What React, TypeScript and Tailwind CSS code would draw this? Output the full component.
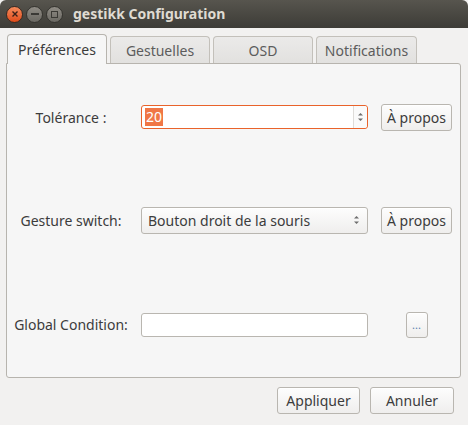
import React from "react";

const font = { fontFamily: '"Noto Sans", "DejaVu Sans", sans-serif' };

function Btn({ children, className = "" }: { children: React.ReactNode; className?: string }) {
  return (
    <div
      className={
        "flex items-center justify-center rounded-[3px] border border-[#b9b6b0] bg-gradient-to-b from-[#fdfdfd] to-[#efeeed] text-[#3c3c3c] shadow-[inset_0_1px_0_#ffffff] " +
        className
      }
    >
      {children}
    </div>
  );
}

function UpDown() {
  return (
    <svg width="7" height="12" viewBox="0 0 7 12">
      <path d="M1 4.5 L3.5 2 L6 4.5 Z" fill="#6d6d6d" />
      <path d="M1 7.5 L3.5 10 L6 7.5 Z" fill="#6d6d6d" />
    </svg>
  );
}

export default function App() {
  return (
    <div className="w-[468px] h-[425px] bg-[#f2f1f0] flex flex-col overflow-hidden" style={font}>
      {/* Title bar */}
      <div className="h-[28px] rounded-t-[6px] bg-gradient-to-b from-[#57554e] to-[#3d3c37] flex items-center relative">
        <div className="flex items-center gap-[3px] pl-[6px]">
          <div className="w-[17px] h-[17px] rounded-full bg-gradient-to-b from-[#f58a5a] to-[#df4a16] border border-[#3a2a22] flex items-center justify-center">
            <svg width="8" height="8" viewBox="0 0 8 8">
              <path d="M1.5 1.5 L6.5 6.5 M6.5 1.5 L1.5 6.5" stroke="#3a2018" strokeWidth="1.4" />
            </svg>
          </div>
          <div className="w-[17px] h-[17px] rounded-full bg-gradient-to-b from-[#8f8c85] to-[#6a6862] border border-[#35342f] flex items-center justify-center">
            <div className="w-[8px] h-[2px] bg-[#3a3935]" />
          </div>
          <div className="w-[17px] h-[17px] rounded-full bg-gradient-to-b from-[#8f8c85] to-[#6a6862] border border-[#35342f] flex items-center justify-center">
            <div className="w-[7px] h-[7px] border-[1.5px] border-[#3a3935]" />
          </div>
        </div>
        <div className="ml-[10px] text-[14px] font-bold text-[#dfdbd2] leading-none">gestikk Configuration</div>
      </div>

      {/* Tabs */}
      <div className="pl-[7px] pt-[6px] flex items-end gap-[3px] h-[35px] relative z-10">
        <div className="w-[100px] h-[30px] -mb-px rounded-t-[4px] border border-b-0 border-[#b7b4ae] bg-[#f6f6f6] flex items-center justify-center text-[14px] text-[#3c3c3c]">
          Préférences
        </div>
        <div className="w-[100px] h-[27px] rounded-t-[4px] border border-b-0 border-[#c3c0ba] bg-gradient-to-b from-[#ebeae9] to-[#e2e1df] flex items-center justify-center text-[14px] text-[#5c5c5c]">
          Gestuelles
        </div>
        <div className="w-[100px] h-[27px] rounded-t-[4px] border border-b-0 border-[#c3c0ba] bg-gradient-to-b from-[#ebeae9] to-[#e2e1df] flex items-center justify-center text-[14px] text-[#5c5c5c]">
          OSD
        </div>
        <div className="w-[101px] h-[27px] rounded-t-[4px] border border-b-0 border-[#c3c0ba] bg-gradient-to-b from-[#ebeae9] to-[#e2e1df] flex items-center justify-center text-[14px] text-[#5c5c5c]">
          Notifications
        </div>
      </div>

      {/* Panel */}
      <div className="ml-[6px] w-[455px] h-[315px] border border-[#b7b4ae] rounded-b-[3px] rounded-tr-[3px] bg-[#f6f6f6] grid grid-rows-3 text-[14px] text-[#3c3c3c]">
        {/* Row 1 */}
        <div className="flex items-center pt-[2px]">
          <div className="w-[128px] text-center">Tolérance :</div>
          <div className="ml-[6px] w-[227px] h-[24px] rounded-[3px] border border-[#e9632b] bg-white flex items-center">
            <div className="flex-1 pl-[3px] flex items-center">
              <span className="bg-[#f07746] text-white px-[1px] leading-[18px]">20</span>
            </div>
            <div className="w-[14px] h-full border-l border-[#dedcd9] flex items-center justify-center bg-[#fafafa] rounded-r-[3px]">
              <UpDown />
            </div>
          </div>
          <Btn className="ml-[13px] w-[71px] h-[27px] text-[14px]">À propos</Btn>
        </div>
        {/* Row 2 */}
        <div className="flex items-center">
          <div className="w-[128px] text-center">Gesture switch:</div>
          <Btn className="ml-[6px] w-[227px] h-[27px] !justify-between px-[6px]">
            <span>Bouton droit de la souris</span>
            <span className="mr-[1px] flex"><UpDown /></span>
          </Btn>
          <Btn className="ml-[13px] w-[71px] h-[27px] text-[14px]">À propos</Btn>
        </div>
        {/* Row 3 */}
        <div className="flex items-center">
          <div className="w-[128px] text-center">Global Condition:</div>
          <div className="ml-[6px] w-[227px] h-[24px] rounded-[3px] border border-[#b9b6b0] bg-white" />
          <div className="ml-[13px] w-[71px] flex justify-center">
            <Btn className="w-[22px] h-[26px] text-[11px] !text-[#5a7fb0]">...</Btn>
          </div>
        </div>
      </div>

      {/* Bottom buttons */}
      <div className="flex justify-end gap-[10px] pr-[14px] pt-[9px] text-[14px]">
        <Btn className="w-[83px] h-[27px]">Appliquer</Btn>
        <Btn className="w-[84px] h-[27px]">Annuler</Btn>
      </div>
    </div>
  );
}
